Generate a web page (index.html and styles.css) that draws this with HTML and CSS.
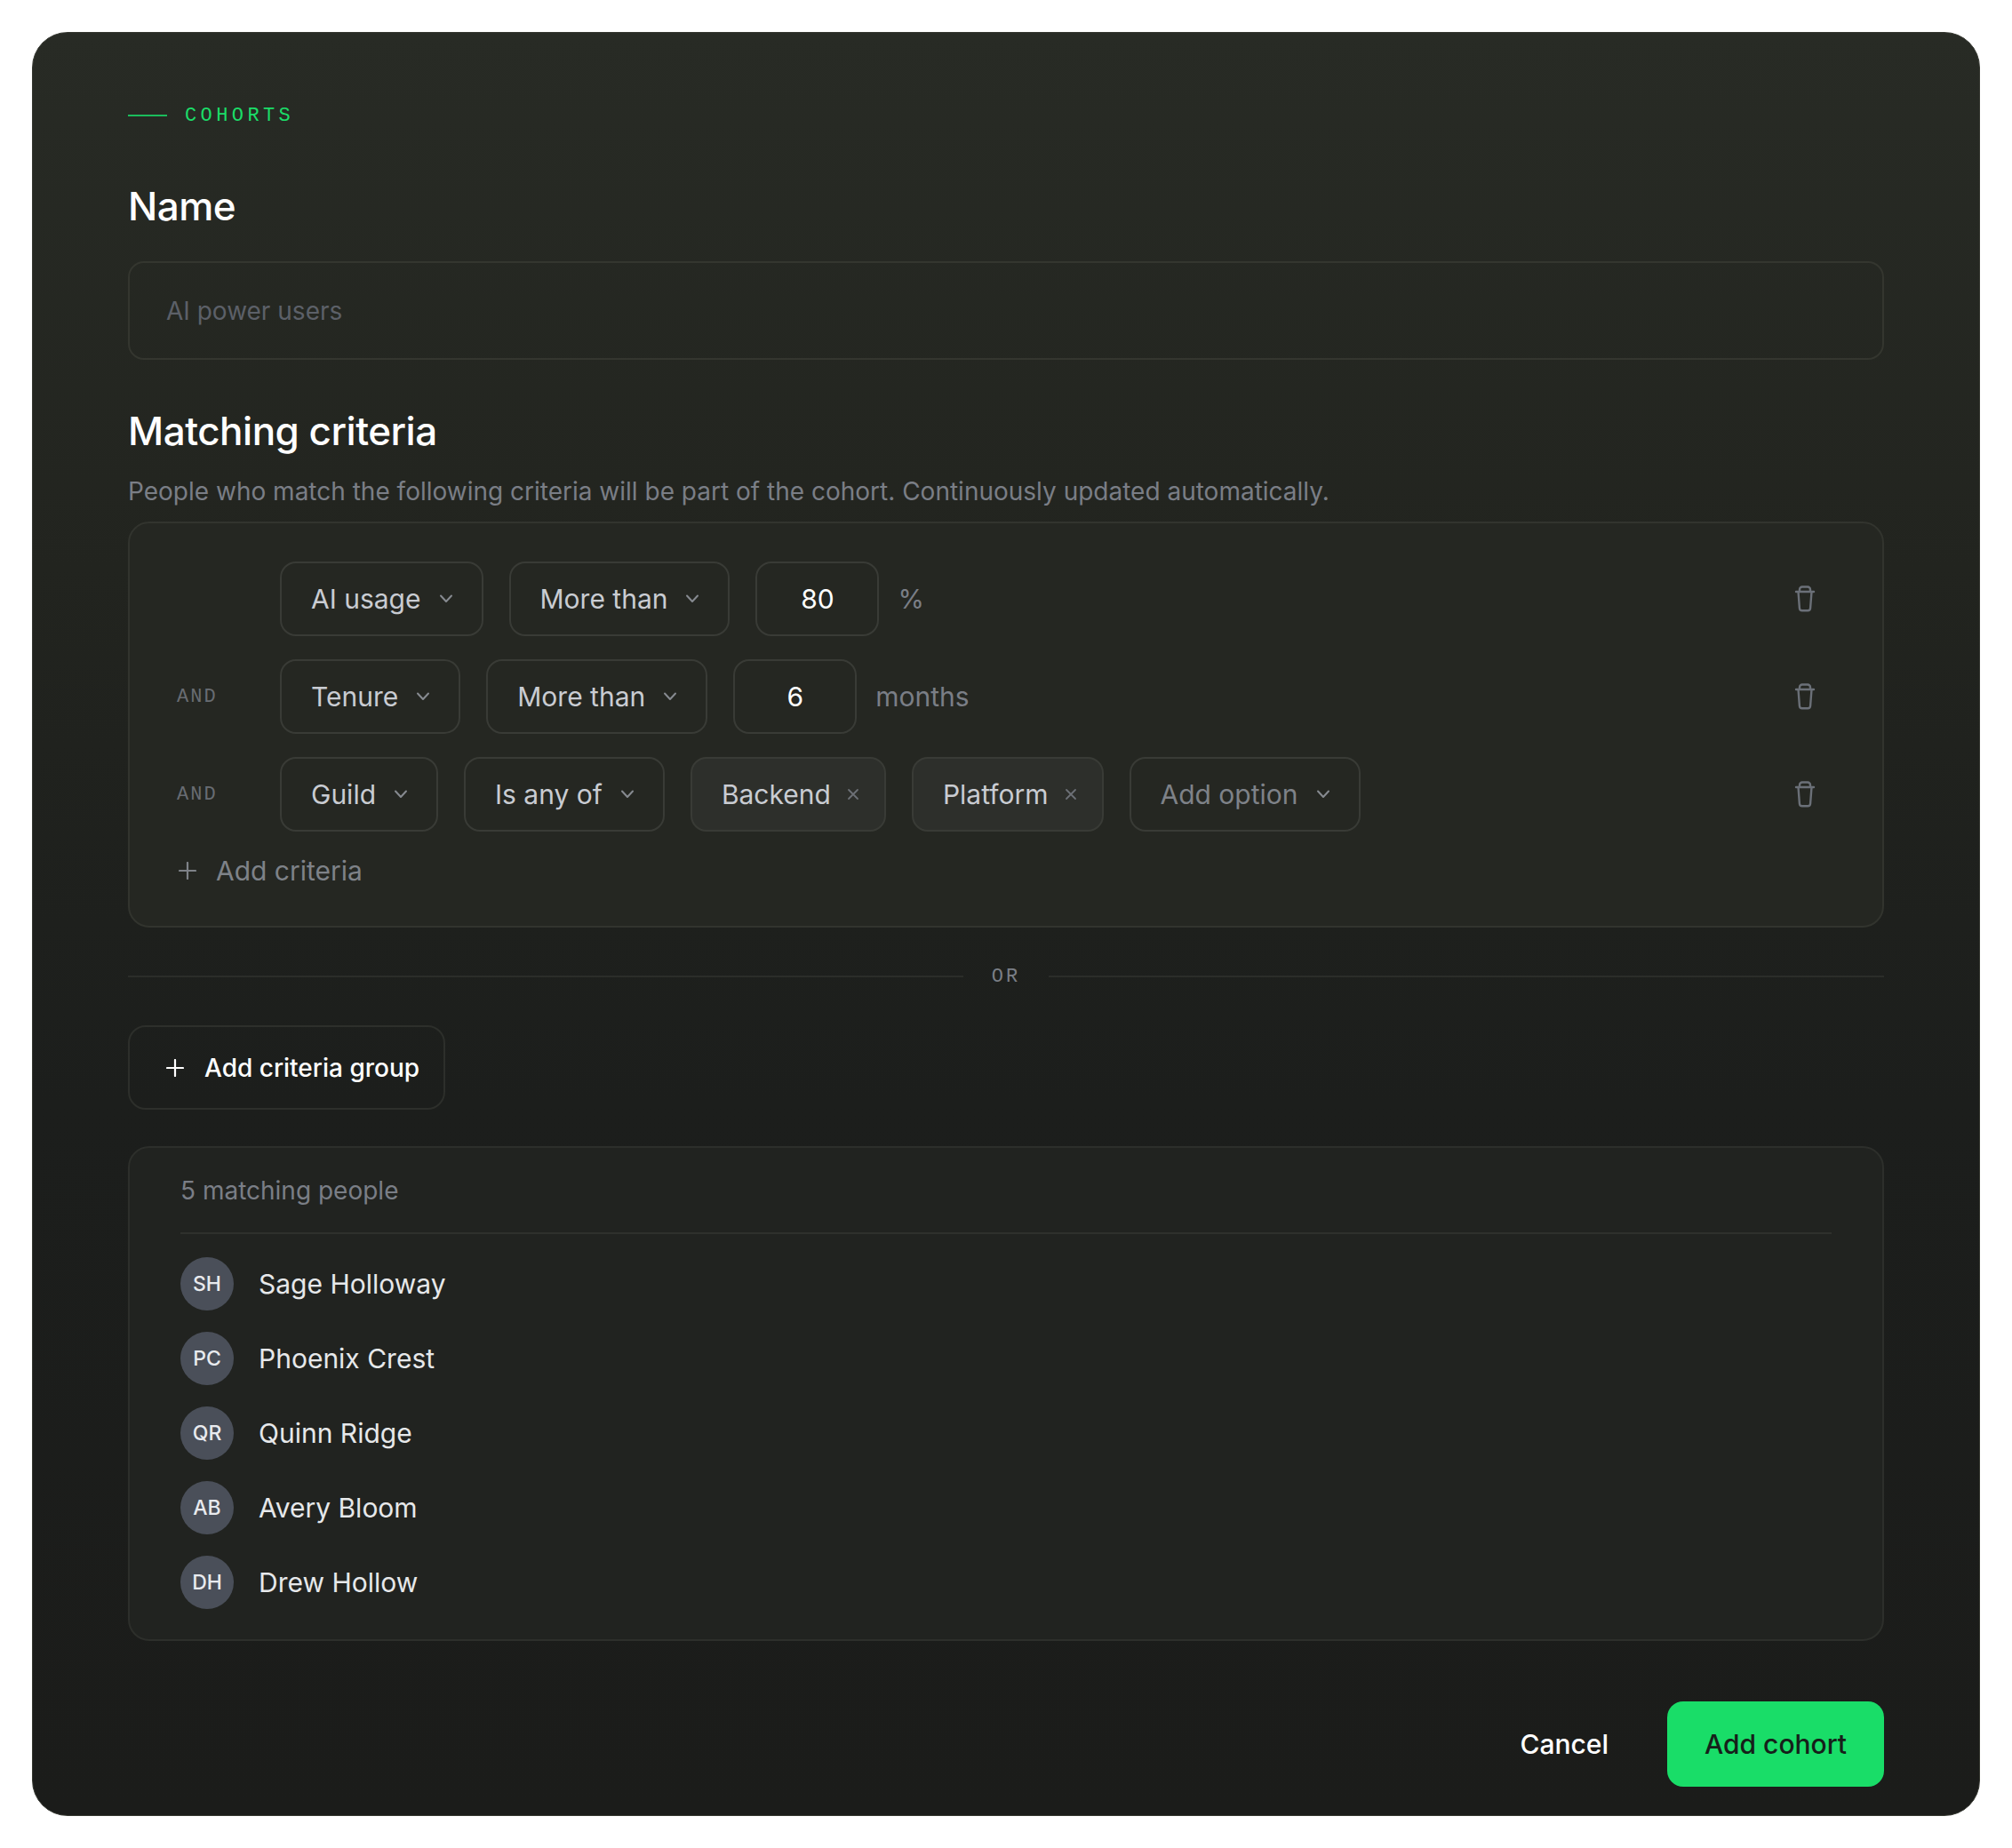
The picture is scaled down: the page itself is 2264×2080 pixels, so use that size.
FILE: index.html
```html
<!doctype html>
<html lang="en">
<head>
	<meta charset="UTF-8">
	<title>Cohorts</title>
	<link rel="stylesheet" href="styles.css">
</head>
<body>
<svg class="defs" width="0" height="0">
	<symbol id="chev" viewBox="0 0 16 10"><path d="M2 1.5 8 8l6-6.500" fill="none" stroke="currentColor" stroke-width="2" stroke-linecap="round" stroke-linejoin="round"/></symbol>
	<symbol id="cross" viewBox="0 0 14 14"><path d="M2 2l10 10M12 2 2 12" fill="none" stroke="currentColor" stroke-width="1.800" stroke-linecap="round"/></symbol>
	<symbol id="plus" viewBox="0 0 20 20"><path d="M10 1v18M1 10h18" fill="none" stroke="currentColor" stroke-width="2.200" stroke-linecap="round"/></symbol>
	<symbol id="trash" viewBox="0 0 24 30"><path d="M2 7h20M6 6.500V4.500A3 3 0 0 1 9 1.500h6a3 3 0 0 1 3 3v2M4.500 7l1.400 18.500a3 3 0 0 0 3 2.800h6.200a3 3 0 0 0 3-2.800L19.500 7" fill="none" stroke="currentColor" stroke-width="2.400" stroke-linecap="round" stroke-linejoin="round"/></symbol>
</svg>
<div class="card">
	<div class="eyebrow"><span class="eyebrow-line"></span>COHORTS</div>

	<h2 class="heading">Name</h2>
	<div class="name-input">AI power users</div>

	<h2 class="heading heading-criteria">Matching criteria</h2>
	<p class="desc">People who match the following criteria will be part of the cohort. Continuously updated automatically.</p>

	<div class="criteria">
		<div class="row">
			<span class="and"></span>
			<div class="field">AI usage<svg class="chev"><use href="#chev"/></svg></div>
			<div class="field">More than<svg class="chev"><use href="#chev"/></svg></div>
			<div class="field num">80</div>
			<span class="unit">%</span>
			<svg class="trash"><use href="#trash"/></svg>
		</div>
		<div class="row">
			<span class="and">AND</span>
			<div class="field">Tenure<svg class="chev"><use href="#chev"/></svg></div>
			<div class="field">More than<svg class="chev"><use href="#chev"/></svg></div>
			<div class="field num">6</div>
			<span class="unit">months</span>
			<svg class="trash"><use href="#trash"/></svg>
		</div>
		<div class="row">
			<span class="and">AND</span>
			<div class="field">Guild<svg class="chev"><use href="#chev"/></svg></div>
			<div class="field">Is any of<svg class="chev"><use href="#chev"/></svg></div>
			<div class="field tag">Backend<svg class="cross"><use href="#cross"/></svg></div>
			<div class="field tag">Platform<svg class="cross"><use href="#cross"/></svg></div>
			<div class="field muted">Add option<svg class="chev"><use href="#chev"/></svg></div>
			<svg class="trash"><use href="#trash"/></svg>
		</div>
		<div class="add-criteria"><svg class="plus-sm"><use href="#plus"/></svg>Add criteria</div>
	</div>

	<div class="or"><span>OR</span></div>

	<div class="add-group"><svg class="plus"><use href="#plus"/></svg>Add criteria group</div>

	<div class="people">
		<div class="people-head">5 matching people</div>
		<div class="person"><span class="avatar">SH</span>Sage Holloway</div>
		<div class="person"><span class="avatar">PC</span>Phoenix Crest</div>
		<div class="person"><span class="avatar">QR</span>Quinn Ridge</div>
		<div class="person"><span class="avatar">AB</span>Avery Bloom</div>
		<div class="person"><span class="avatar">DH</span>Drew Hollow</div>
	</div>

	<div class="actions">
		<span class="cancel">Cancel</span>
		<span class="submit">Add cohort</span>
	</div>
</div>
</body>
</html>
```
FILE: styles.css
```css
*{
	margin:0;
	padding:0;
	box-sizing:border-box;
}
body{
	background:#fff;
	font-family:Inter,"Liberation Sans",sans-serif;
	font-size:30px;
	color:#fff;
	padding:36px;
}
.defs{
	position:absolute;
}
.card{
	width:2192px;
	height:2008px;
	padding:73px 107px 0;
	border:1px solid #34362f;
	border-radius:40px;
	background:linear-gradient(180deg,#282b25 0%,#22241f 30%,#1c1e1c 60%,#1b1c1a 100%);
}
.eyebrow{
	display:flex;
	align-items:center;
	gap:20px;
	height:40px;
	font-family:"Liberation Mono",monospace;
	font-size:22px;
	letter-spacing:4.400px;
	color:#1bdd68;
}
.eyebrow-line{
	width:44px;
	height:2px;
	background:#1bbd5c;
}
.heading{
	margin-top:54px;
	font-size:44px;
	line-height:56px;
	font-weight:500;
	letter-spacing:-0.5px;
}
.name-input{
	display:flex;
	align-items:center;
	height:111px;
	margin-top:34px;
	padding:0 41px;
	border:2px solid #34362f;
	border-radius:18px;
	color:#5c6068;
	font-size:28px;
}
.heading-criteria{
	margin-top:52px;
}
.desc{
	margin-top:20px;
	line-height:40px;
	font-size:28px;
	color:#7a7e86;
}
.criteria{
	height:457px;
	margin-top:14px;
	padding:43px 53px 0;
	border:2px solid #32342e;
	border-radius:24px;
	background:#252722;
}
.row{
	display:flex;
	align-items:center;
	gap:29px;
	height:84px;
	margin-bottom:26px;
}
.and{
	width:88px;
	margin-right:-1px;
	font-family:"Liberation Mono",monospace;
	font-size:22px;
	letter-spacing:2px;
	color:#686c72;
}
.field{
	display:flex;
	align-items:center;
	gap:20px;
	height:84px;
	padding:0 32px 0 33px;
	border:2px solid #393b36;
	border-radius:18px;
	color:#c9ccd2;
}
.chev{
	width:16px;
	height:10px;
	color:#868a90;
}
.num{
	justify-content:center;
	width:139px;
	padding:0;
	color:#fff;
}
.tag{
	background:#2d2f2b;
	gap:18px;
	padding-right:28px;
}
.cross{
	width:14px;
	height:14px;
	color:#6c7076;
}
.muted{
	color:#7e8288;
}
.unit{
	margin-left:-8px;
	color:#7a7e86;
}
.trash{
	width:24px;
	height:30px;
	margin-left:auto;
	margin-right:22px;
	color:#6b7078;
}
.add-criteria{
	display:flex;
	align-items:center;
	gap:22px;
	margin-top:-4px;
	padding-left:2px;
	height:44px;
	color:#7e8288;
}
.plus-sm{
	width:20px;
	height:20px;
}
.or{
	display:flex;
	align-items:center;
	gap:32px;
	height:32px;
	margin-top:39px;
	font-family:"Liberation Mono",monospace;
	font-size:22px;
	letter-spacing:3px;
	color:#7a7e86;
}
.or::before,.or::after{
	content:"";
	flex:1;
	height:2px;
	background:#2b2d29;
}
.add-group{
	display:inline-flex;
	align-items:center;
	gap:23px;
	width:357px;
	height:95px;
	margin-top:39px;
	padding-left:41px;
	border:2px solid #2d2f2b;
	border-radius:20px;
	font-weight:500;
	font-size:28px;
}
.plus{
	width:20px;
	height:20px;
}
.people{
	height:557px;
	margin-top:41px;
	padding:0 57px;
	border:2px solid #2d2f2b;
	border-radius:24px;
	background:#212320;
}
.people-head{
	display:flex;
	align-items:center;
	height:97px;
	margin-bottom:14px;
	border-bottom:2px solid #2e302c;
	font-size:28px;
	color:#7a7e86;
}
.person{
	display:flex;
	align-items:center;
	gap:28px;
	height:84px;
	color:#e6e8ea;
	font-size:30px;
}
.avatar{
	display:flex;
	align-items:center;
	justify-content:center;
	width:60px;
	height:60px;
	border-radius:50%;
	background:#4a4f59;
	font-size:23px;
	font-weight:500;
	color:#e8eaee;
}
.actions{
	display:flex;
	align-items:center;
	justify-content:flex-end;
	gap:66px;
	margin-top:68px;
}
.cancel{
	font-size:30px;
	font-weight:500;
}
.submit{
	display:flex;
	align-items:center;
	justify-content:center;
	width:244px;
	height:96px;
	border-radius:18px;
	background:#19dd68;
	color:#16201a;
	font-size:30px;
	font-weight:500;
}
```
